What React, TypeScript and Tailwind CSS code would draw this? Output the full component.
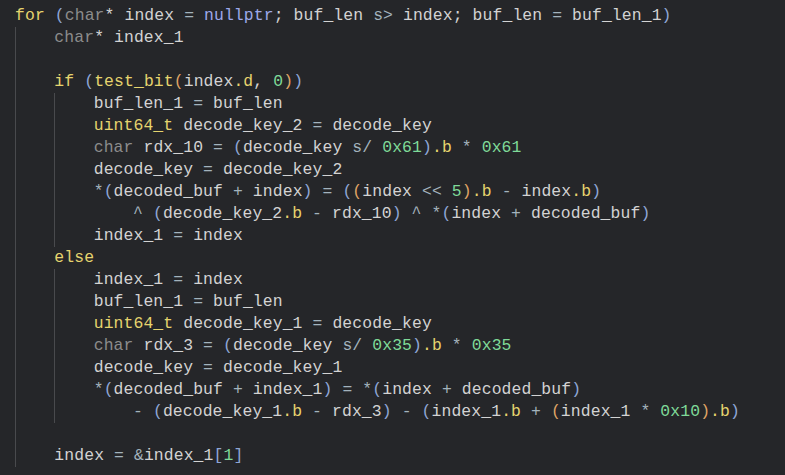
import type { ReactNode } from "react"

type Tok = [string, keyof typeof tone] | string

const tone = {
  k: "text-[#e6d46e]",
  c: "text-[#8c8c8c]",
  n: "text-[#9da9ea]",
  p: "text-[#8fa6d6]",
  o: "text-[#dfa466]",
  g: "text-[#7fda98]",
  op: "text-[#a3b3bd]",
}

function Line({ toks = [], hang = false }: { toks?: Tok[]; hang?: boolean }) {
  return (
    <div className={`h-[22px] leading-[22px] whitespace-pre ${hang ? "pl-[4ch]" : ""}`}>
      {toks.map((t, i) =>
        typeof t === "string" ? <span key={i}>{t}</span> : <span key={i} className={tone[t[1]]}>{t[0]}</span>
      )}
    </div>
  )
}

function Block({ children }: { children: ReactNode }) {
  return <div className="border-l border-[#494a4d] pl-[calc(4ch_-_1px)]">{children}</div>
}

export default function App() {
  return (
    <div className="min-h-screen bg-[#252629] pt-[5px] pl-[15px] font-['Liberation_Mono',monospace] text-[16.4px] tracking-[0.11px] text-[#d3d3d3]">
      <Line toks={[["for", "k"], " ", ["(", "p"], ["char", "c"], "* index ", ["=", "op"], " ", ["nullptr", "n"], "; buf_len ", ["s>", "op"], " index; buf_len ", ["=", "op"], " buf_len_1", [")", "p"]]} />
      <Block>
        <Line toks={[["char", "c"], "* index_1"]} />
        <Line />
        <Line toks={[["if", "k"], " ", ["(", "p"], ["test_bit", "k"], ["(", "o"], "index", [".d", "k"], ", ", ["0", "g"], [")", "o"], [")", "p"]]} />
        <Block>
          <Line toks={["buf_len_1 ", ["=", "op"], " buf_len"]} />
          <Line toks={[["uint64_t", "k"], " decode_key_2 ", ["=", "op"], " decode_key"]} />
          <Line toks={[["char", "c"], " rdx_10 ", ["=", "op"], " ", ["(", "p"], "decode_key ", ["s/", "op"], " ", ["0x61", "g"], [")", "p"], [".b", "k"], " ", ["*", "op"], " ", ["0x61", "g"]]} />
          <Line toks={["decode_key ", ["=", "op"], " decode_key_2"]} />
          <Line toks={[["*", "op"], ["(", "p"], "decoded_buf ", ["+", "op"], " index", [")", "p"], " ", ["=", "op"], " ", ["(", "p"], ["(", "o"], "index ", ["<<", "op"], " ", ["5", "g"], [")", "o"], [".b", "k"], " ", ["-", "op"], " index", [".b", "k"], [")", "p"]]} />
          <Line hang toks={[["^", "op"], " ", ["(", "p"], "decode_key_2", [".b", "k"], " ", ["-", "op"], " rdx_10", [")", "p"], " ", ["^", "op"], " ", ["*", "op"], ["(", "p"], "index ", ["+", "op"], " decoded_buf", [")", "p"]]} />
          <Line toks={["index_1 ", ["=", "op"], " index"]} />
        </Block>
        <Line toks={[["else", "k"]]} />
        <Block>
          <Line toks={["index_1 ", ["=", "op"], " index"]} />
          <Line toks={["buf_len_1 ", ["=", "op"], " buf_len"]} />
          <Line toks={[["uint64_t", "k"], " decode_key_1 ", ["=", "op"], " decode_key"]} />
          <Line toks={[["char", "c"], " rdx_3 ", ["=", "op"], " ", ["(", "p"], "decode_key ", ["s/", "op"], " ", ["0x35", "g"], [")", "p"], [".b", "k"], " ", ["*", "op"], " ", ["0x35", "g"]]} />
          <Line toks={["decode_key ", ["=", "op"], " decode_key_1"]} />
          <Line toks={[["*", "op"], ["(", "p"], "decoded_buf ", ["+", "op"], " index_1", [")", "p"], " ", ["=", "op"], " ", ["*", "op"], ["(", "p"], "index ", ["+", "op"], " decoded_buf", [")", "p"]]} />
          <Line hang toks={[["-", "op"], " ", ["(", "p"], "decode_key_1", [".b", "k"], " ", ["-", "op"], " rdx_3", [")", "p"], " ", ["-", "op"], " ", ["(", "p"], "index_1", [".b", "k"], " ", ["+", "op"], " ", ["(", "o"], "index_1 ", ["*", "op"], " ", ["0x10", "g"], [")", "o"], [".b", "k"], [")", "p"]]} />
        </Block>
        <Line />
        <Line toks={["index ", ["=", "op"], " ", ["&", "op"], "index_1", ["[", "p"], ["1", "g"], ["]", "p"]]} />
      </Block>
    </div>
  )
}
